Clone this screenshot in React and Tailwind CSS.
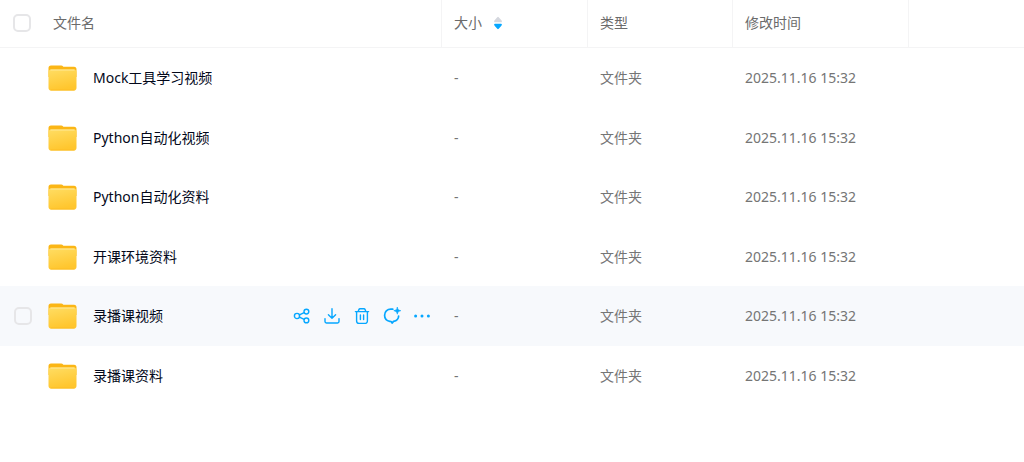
const files = [
  { name: 'Mock工具学习视频', size: '-', type: '文件夹', time: '2025.11.16 15:32' },
  { name: 'Python自动化视频', size: '-', type: '文件夹', time: '2025.11.16 15:32' },
  { name: 'Python自动化资料', size: '-', type: '文件夹', time: '2025.11.16 15:32' },
  { name: '开课环境资料', size: '-', type: '文件夹', time: '2025.11.16 15:32' },
  { name: '录播课视频', size: '-', type: '文件夹', time: '2025.11.16 15:32', active: true },
  { name: '录播课资料', size: '-', type: '文件夹', time: '2025.11.16 15:32' },
];

const iconProps = {
  viewBox: '0 0 18 18',
  fill: 'none',
  stroke: 'currentColor',
  strokeWidth: 1.4,
  strokeLinecap: 'round',
  strokeLinejoin: 'round',
  className: 'w-[18px] h-[18px]',
};

function ShareIcon() {
  return (
    <svg {...iconProps}>
      <circle cx="4" cy="9" r="2.6" />
      <circle cx="13.4" cy="4.6" r="2.4" />
      <circle cx="13.4" cy="13.4" r="2.4" />
      <path d="M6.4 7.9l4.8-2.2M6.4 10.1l4.8 2.2" />
    </svg>
  );
}

function DownloadIcon() {
  return (
    <svg {...iconProps}>
      <path d="M9 1.8v9.4M5.4 7.8L9 11.3l3.6-3.5M2 11.6v3a1.4 1.4 0 0 0 1.4 1.4h11.2a1.4 1.4 0 0 0 1.4-1.4v-3" />
    </svg>
  );
}

function TrashIcon() {
  return (
    <svg {...iconProps}>
      <path d="M2.4 4.6h13.2M5.2 4.4l.6-1.7a1.4 1.4 0 0 1 1.3-.9h3.8a1.4 1.4 0 0 1 1.3.9l.6 1.7M3.6 4.8V14A2.4 2.4 0 0 0 6 16.4h6a2.4 2.4 0 0 0 2.4-2.4V4.8M7.4 8v4.6M10.6 8v4.6" />
    </svg>
  );
}

function AssistantIcon() {
  return (
    <svg {...iconProps} strokeWidth={1.7}>
      <path d="M9.8 2.2H7.8C4.2 2.2 1.6 4.800 1.6 8.2c0 3.300 2.300 5.600 5.200 6.100l1.300.2 1 1.600 1.400-1.700c3.100-.6 5.100-2.800 5.100-5.400" />
      <path d="M14.3.2c.5 2.3 1.2 3 3.5 3.5-2.3.5-3 1.2-3.500 3.500-.5-2.300-1.200-3-3.500-3.500 2.300-.5 3-1.200 3.500-3.500z" fill="currentColor" strokeWidth="0.6" />
    </svg>
  );
}

function MoreIcon() {
  return (
    <svg viewBox="0 0 18 18" fill="currentColor" className="w-[18px] h-[18px]">
      <circle cx="2.6" cy="9" r="1.5" />
      <circle cx="9" cy="9" r="1.5" />
      <circle cx="15.4" cy="9" r="1.5" />
    </svg>
  );
}

const actions = [
  { label: '分享', Icon: ShareIcon },
  { label: '下载', Icon: DownloadIcon },
  { label: '删除', Icon: TrashIcon },
  { label: '智能助手', Icon: AssistantIcon },
  { label: '更多', Icon: MoreIcon },
];

function FolderIcon() {
  return (
    <svg viewBox="0 0 29 26" className="w-[29px] h-[26px] shrink-0">
      <defs>
        <linearGradient id="folder-front" x1="0" y1="0" x2="0.3" y2="1">
          <stop offset="0" stopColor="#ffdd63" />
          <stop offset="1" stopColor="#ffc62e" />
        </linearGradient>
      </defs>
      <path d="M.5 3A2.5 2.5 0 0 1 3 .5h10.2c.8 0 1.5.5 2.2 1.3H26a2.500 2.500 0 0 1 2.500 2.500V12H.5z" fill="#fbb615" />
      <path d="M.5 7.300c0-1.700 1-2.700 2.600-2.700h22.800c1.700 0 2.600 1 2.600 2.700v15.400a2.800 2.800 0 0 1-2.800 2.800H3.300a2.800 2.800 0 0 1-2.800-2.800z" fill="url(#folder-front)" />
      <path d="M2.8 5h23.400" stroke="#ffe99a" strokeWidth="1" strokeLinecap="round" />
      <path d="M3 25h23" stroke="#fcbd25" strokeWidth="1" strokeLinecap="round" />
    </svg>
  );
}

function Checkbox({ label, className = '' }) {
  return (
    <input
      type="checkbox"
      aria-label={label}
      className={`w-[18px] h-[18px] shrink-0 appearance-none rounded-[5px] border-2 border-[#e6e6e8] bg-transparent checked:border-[#06a7ff] checked:bg-[#06a7ff] ${className}`}
    />
  );
}

function SortIcon() {
  return (
    <svg viewBox="0 0 8 14" className="w-2 h-[14px]">
      <path d="M1 6.3C-.1 6.3-.1 5 .6 4.2L3.3 1.2a1 1 0 0 1 1.4 0l2.7 3c.7.8.7 2.1-.4 2.1z" fill="#d4d7de" />
      <path d="M1 7.7C-.1 7.7-.1 9 .6 9.8l2.7 3a1 1 0 0 0 1.4 0l2.7-3c.7-.8.7-2.1-.4-2.1z" fill="#06a7ff" />
    </svg>
  );
}

export default function App() {
  return (
    <main className="min-h-screen bg-white font-['Noto_Sans','Noto_Sans_CJK_SC',sans-serif] text-sm">
      <table className="w-full table-fixed border-separate border-spacing-0 text-left">
        <colgroup>
          <col />
          <col className="w-[146px]" />
          <col className="w-[145px]" />
          <col className="w-[176px]" />
          <col className="w-[115px]" />
        </colgroup>
        <thead className="text-[#6b6b6b]">
          <tr className="h-12">
            <th className="border-r border-b border-[#f4f4f5] px-0 pt-0 pb-0.5 font-normal">
              <div className="flex items-center gap-[22px] pl-[13px]">
                <Checkbox label="全选" />
                <span>文件名</span>
              </div>
            </th>
            <th className="border-r border-b border-[#f4f4f5] px-3 pt-0 pb-0.5 font-normal">
              <button type="button" className="flex items-center gap-3">
                大小
                <SortIcon />
              </button>
            </th>
            <th className="border-r border-b border-[#f4f4f5] px-3 pt-0 pb-0.5 font-normal">类型</th>
            <th className="border-r border-b border-[#f4f4f5] px-3 pt-0 pb-0.5 font-normal">修改时间</th>
            <td className="border-b border-[#f4f4f5] p-0" />
          </tr>
        </thead>
        <tbody className="text-[#757575]">
          {files.map((file) => (
            <tr
              key={file.name}
              className={`group odd:h-[60px] even:h-[59px] hover:bg-[#f7f9fc] ${file.active ? 'bg-[#f7f9fc]' : ''}`}
            >
              <td className="p-0">
                <div className="flex items-center pl-[14px] pr-[5px]">
                  <Checkbox
                    label={`选择 ${file.name}`}
                    className={file.active ? '' : 'opacity-0 group-hover:opacity-100'}
                  />
                  <div className="flex min-w-0 flex-1 items-center gap-4 pl-4">
                    <FolderIcon />
                    <a href="#" className="truncate text-[#03081a]">{file.name}</a>
                  </div>
                  {file.active && (
                    <div className="flex shrink-0 text-[#06a7ff]">
                      {actions.map(({ label, Icon }) => (
                        <button key={label} type="button" aria-label={label} className="flex h-6 w-[30px] items-center justify-center">
                          <Icon />
                        </button>
                      ))}
                    </div>
                  )}
                </div>
              </td>
              <td className="px-3 py-0">{file.size}</td>
              <td className="px-3 py-0">{file.type}</td>
              <td className="px-3 py-0">{file.time}</td>
              <td className="p-0" />
            </tr>
          ))}
        </tbody>
      </table>
    </main>
  );
}
